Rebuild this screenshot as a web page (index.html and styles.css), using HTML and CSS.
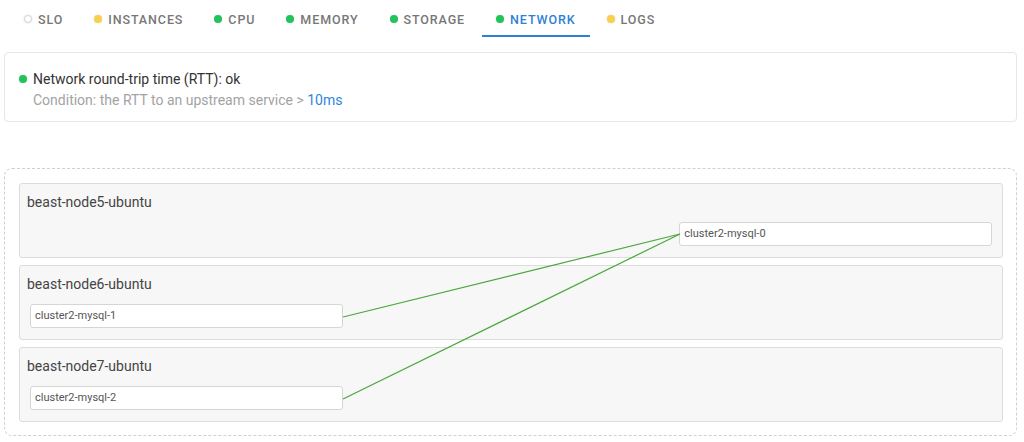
FILE: index.html
```html
<!DOCTYPE html>
<html>
<head>
<meta charset="utf-8">
<link rel="stylesheet" href="styles.css">
</head>
<body>
<nav class="tabs">
  <div class="tab"><span class="dot dot-none"></span>SLO</div>
  <div class="tab"><span class="dot dot-warn"></span>INSTANCES</div>
  <div class="tab"><span class="dot dot-ok"></span>CPU</div>
  <div class="tab"><span class="dot dot-ok"></span>MEMORY</div>
  <div class="tab"><span class="dot dot-ok"></span>STORAGE</div>
  <div class="tab active"><span class="dot dot-ok"></span>NETWORK</div>
  <div class="tab"><span class="dot dot-warn"></span>LOGS</div>
</nav>

<section class="card">
  <div class="check-title"><span class="dot dot-ok"></span>Network round-trip time (RTT): ok</div>
  <div class="check-cond">Condition: the RTT to an upstream service &gt; <span class="threshold">10ms</span></div>
</section>

<section class="map">
  <svg class="links" width="1012" height="266" viewBox="0 0 1012 266">
    <line x1="338" y1="148" x2="675" y2="65" />
    <line x1="338" y1="230" x2="675" y2="65" />
  </svg>
  <div class="node">
    <div class="node-name">beast-node5-ubuntu</div>
    <div class="pods">
      <div class="pod col3">cluster2-mysql-0</div>
    </div>
  </div>
  <div class="node">
    <div class="node-name">beast-node6-ubuntu</div>
    <div class="pods">
      <div class="pod col1">cluster2-mysql-1</div>
    </div>
  </div>
  <div class="node">
    <div class="node-name">beast-node7-ubuntu</div>
    <div class="pods">
      <div class="pod col1">cluster2-mysql-2</div>
    </div>
  </div>
</section>
</body>
</html>
```

FILE: styles.css
```css
* { box-sizing: border-box; }
html, body { margin: 0; padding: 0; background: #fff; }
body {
  font-family: Roboto, "Liberation Sans", Arial, sans-serif;
  color: #333;
  width: 1024px;
  height: 442px;
  overflow: hidden;
}

.tabs {
  display: flex;
  gap: 3px;
  padding-left: 10px;
  height: 37px;
}
.tab {
  display: flex;
  align-items: center;
  gap: 6px;
  height: 37px;
  padding: 3px 14px 0;
  border-bottom: 2px solid transparent;
  font-size: 12.5px;
  font-weight: 500;
  letter-spacing: 0.9px;
  color: #777;
}
.tab.active {
  color: #2f7fd6;
  border-bottom-color: #2f7fd6;
}

.dot {
  display: inline-block;
  width: 8px;
  height: 8px;
  border-radius: 50%;
  flex: none;
  box-shadow: 0 0 2px rgba(0,0,0,0.15);
}
.dot-ok { background: #22c35a; }
.dot-warn { background: #f8d04c; }
.dot-none { background: #fff; border: 1px solid #d6d6d6; }

.card {
  margin: 15px 7px 0 4px;
  border: 1px solid #e6e6e6;
  border-radius: 4px;
  padding: 16px 14px 11px 14px;
  height: 70px;
}
.check-title {
  display: flex;
  align-items: center;
  gap: 6px;
  font-size: 14px;
  line-height: 20px;
  color: #333;
}
.check-cond {
  padding-left: 14px;
  font-size: 14px;
  line-height: 22px;
  color: #a3a3a3;
}
.threshold { color: #2f86d8; }

.map {
  position: relative;
  margin: 46px 7px 0 4px;
  border: 1px dashed #d0d0d0;
  border-radius: 8px;
  padding: 14px 13px 13px 14px;
  height: 268px;
  display: flex;
  flex-direction: column;
  gap: 7px;
}
.links {
  position: absolute;
  left: 0;
  top: 0;
  pointer-events: none;
}
.links line {
  stroke: #4aa83c;
  stroke-width: 1.2;
}

.node {
  height: 75px;
  background: #f7f7f7;
  border: 1px solid #dcdcdc;
  border-radius: 3px;
  padding: 8px 10px 0 7px;
}
.node-name {
  font-size: 14px;
  line-height: 20px;
  color: #444;
}
.pods {
  display: grid;
  grid-template-columns: repeat(3, 1fr);
  column-gap: 12px;
  margin-top: 10px;
  padding-left: 3px;
}
.pod {
  height: 24px;
  background: #fff;
  border: 1px solid #d6d6d6;
  border-radius: 3px;
  padding-left: 4px;
  font-size: 11px;
  line-height: 22px;
  color: #555;
}
.col1 { grid-column: 1; }
.col3 { grid-column: 3; }
```
